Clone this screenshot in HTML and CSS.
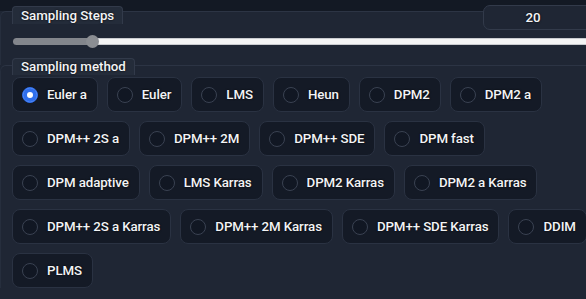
FILE: index.html
```html
<!DOCTYPE html>
<html>
<head>
<meta charset="utf-8">
<link rel="stylesheet" href="styles.css">
</head>
<body>
<div class="top-band"></div>
<section class="block steps">
  <div class="steps-head">
    <span class="label">Sampling Steps</span>
    <div class="num">20</div>
  </div>
  <div class="slider">
    <div class="fill"></div>
    <div class="thumb"></div>
    <div class="rest"></div>
  </div>
</section>
<section class="block method">
  <span class="label">Sampling method</span>
  <div class="options">
    <label class="opt"><span class="radio checked"></span><span class="txt">Euler a</span></label>
    <label class="opt"><span class="radio"></span><span class="txt">Euler</span></label>
    <label class="opt"><span class="radio"></span><span class="txt">LMS</span></label>
    <label class="opt"><span class="radio"></span><span class="txt">Heun</span></label>
    <label class="opt"><span class="radio"></span><span class="txt">DPM2</span></label>
    <label class="opt"><span class="radio"></span><span class="txt">DPM2 a</span></label>
    <label class="opt"><span class="radio"></span><span class="txt">DPM++ 2S a</span></label>
    <label class="opt"><span class="radio"></span><span class="txt">DPM++ 2M</span></label>
    <label class="opt"><span class="radio"></span><span class="txt">DPM++ SDE</span></label>
    <label class="opt"><span class="radio"></span><span class="txt">DPM fast</span></label>
    <label class="opt"><span class="radio"></span><span class="txt">DPM adaptive</span></label>
    <label class="opt"><span class="radio"></span><span class="txt">LMS Karras</span></label>
    <label class="opt"><span class="radio"></span><span class="txt">DPM2 Karras</span></label>
    <label class="opt"><span class="radio"></span><span class="txt">DPM2 a Karras</span></label>
    <label class="opt"><span class="radio"></span><span class="txt">DPM++ 2S a Karras</span></label>
    <label class="opt"><span class="radio"></span><span class="txt">DPM++ 2M Karras</span></label>
    <label class="opt"><span class="radio"></span><span class="txt">DPM++ SDE Karras</span></label>
    <label class="opt"><span class="radio"></span><span class="txt">DDIM</span></label>
    <label class="opt"><span class="radio"></span><span class="txt">PLMS</span></label>
  </div>
</section>
</body>
</html>
```
FILE: styles.css
```css
* { box-sizing: border-box; }
html, body {
  margin: 0;
  padding: 0;
}
body {
  width: 586px;
  height: 299px;
  overflow: hidden;
  background: #1f2634;
  font-family: Roboto, "Noto Sans", sans-serif;
  font-size: 13.3px;
  font-weight: 500;
  color: #f3f4f6;
}
.top-band {
  height: 11px;
  background: #131924;
}
.block {
  width: 620px;
  border-top: 1px solid #2c3444;
  border-left: 1px solid #262e3d;
  border-top-left-radius: 6px;
  padding-left: 11px;
}
.steps {
  height: 54px;
}
.steps-head {
  display: flex;
  justify-content: space-between;
  align-items: flex-start;
  margin-top: -7px;
  height: 25px;
}
.label {
  display: block;
  width: max-content;
  height: 18px;
  line-height: 17px;
  padding: 0 8px;
  margin-top: 1px;
  background: #242c3a;
  border: 1px solid #323a4a;
  border-bottom: none;
  border-radius: 4px 4px 0 0;
  text-shadow: 0 0 2px #000;
}
.num {
  width: 110px;
  height: 25px;
  margin-right: 27px;
  padding-right: 10px;
  line-height: 24px;
  text-align: center;
  border: 1px solid #323a4a;
  border-radius: 7px;
  background: #1f2634;
  text-shadow: 0 0 2px #000;
}
.slider {
  display: flex;
  align-items: center;
  height: 11px;
  margin-top: 6px;
  margin-left: 1px;
}
.fill {
  width: 79px;
  height: 7px;
  background: #83868c;
  border-radius: 4px 0 0 4px;
}
.thumb {
  width: 13px;
  height: 13px;
  margin: 0 -6px;
  border-radius: 50%;
  background: #8b8e93;
  position: relative;
  z-index: 1;
}
.rest {
  flex: 1;
  height: 7px;
  background: #f4f4f4;
  border-top: 1px solid #c9cbcf;
  border-bottom: 1px solid #c9cbcf;
}
.method .label {
  margin-top: -8px;
  height: 17px;
  line-height: 16px;
}
.options {
  width: 590px;
  display: flex;
  flex-wrap: wrap;
  gap: 9px 9px;
  margin-top: 2px;
}
.opt {
  display: flex;
  align-items: center;
  gap: 9px;
  height: 35px;
  padding: 0 10px 0 9px;
  background: #141a26;
  border: 1px solid #2a3242;
  border-radius: 8px;
}
.radio {
  width: 16px;
  height: 16px;
  border-radius: 50%;
  background: #111723;
  border: 1px solid #3a4252;
  flex: none;
}
.radio.checked {
  background: #2f6fed;
  border-color: #2f6fed;
  box-shadow: inset 0 0 0 4px #2f6fed, inset 0 0 0 8px #ffffff;
}
.txt {
  white-space: nowrap;
  letter-spacing: -0.1px;
  text-shadow: 0 0 2px #000;
}
```
